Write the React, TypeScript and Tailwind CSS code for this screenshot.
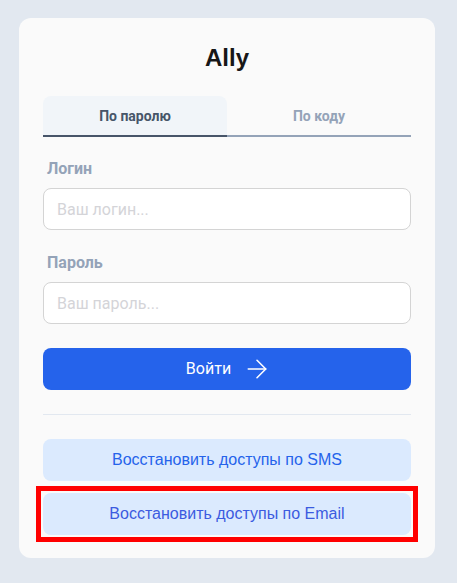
import { ArrowRight } from "lucide-react";

const sans = "font-['Roboto','Liberation_Sans',sans-serif]";
const arial = "font-['Liberation_Sans','Arial',sans-serif]";

function Field({ label, placeholder, type }: { label: string; placeholder: string; type: string }) {
  return (
    <div className="flex flex-col">
      <label className={`${sans} px-1 text-base leading-5 font-bold text-[#94a3b8]`}>{label}</label>
      <input
        type={type}
        placeholder={placeholder}
        className={`${sans} mt-[9px] h-[42px] w-full rounded-lg border border-[#d4d4d4] bg-white px-[13px] text-base text-[#334155] outline-none placeholder:text-[#d4d4d8]`}
      />
    </div>
  );
}

export default function App() {
  return (
    <div className="min-h-screen bg-[#e2e8f0] px-[19px] pt-[18px]">
      <div className="flex w-[416px] flex-col rounded-xl bg-[#fafafa] px-6 pt-6 pb-[23px]">
        <h1 className={`${arial} text-center text-2xl leading-8 font-bold text-[#171717]`}>Ally</h1>

        {/* Tabs */}
        <div className="mt-[22px] grid grid-cols-2">
          <button className={`${sans} h-[41px] rounded-t-lg border-b-2 border-[#475569] bg-[#f1f5f9] text-sm font-bold text-[#475569]`}>
            По паролю
          </button>
          <button className={`${sans} h-[41px] border-b-2 border-[#94a3b8] text-sm font-bold text-[#94a3b8]`}>
            По коду
          </button>
        </div>

        <div className="mt-[22px] flex flex-col gap-[23px]">
          <Field label="Логин" placeholder="Ваш логин..." type="text" />
          <Field label="Пароль" placeholder="Ваш пароль..." type="password" />
        </div>

        <button
          className={`${sans} mt-6 flex h-[42px] items-center justify-center gap-[11px] rounded-lg bg-[#2563eb] pl-1 text-base text-white`}
        >
          Войти
          <ArrowRight className="size-[30px]" strokeWidth={1.25} />
        </button>

        <div className="mt-6 h-px bg-[#e2e8f0]" />

        <div className="mt-6 flex flex-col gap-3">
          <button className={`${arial} h-[42px] rounded-lg bg-[#dbeafe] text-base text-[#2563eb]`}>
            Восстановить доступы по SMS
          </button>
          <div className="relative">
            <button className={`${arial} h-[42px] w-full rounded-lg bg-[#dbeafe] text-base text-[#3b5be0]`}>
              Восстановить доступы по Email
            </button>
            <div className="pointer-events-none absolute -inset-[7px] border-[5px] border-[#ff0000]" />
          </div>
        </div>
      </div>
    </div>
  );
}
